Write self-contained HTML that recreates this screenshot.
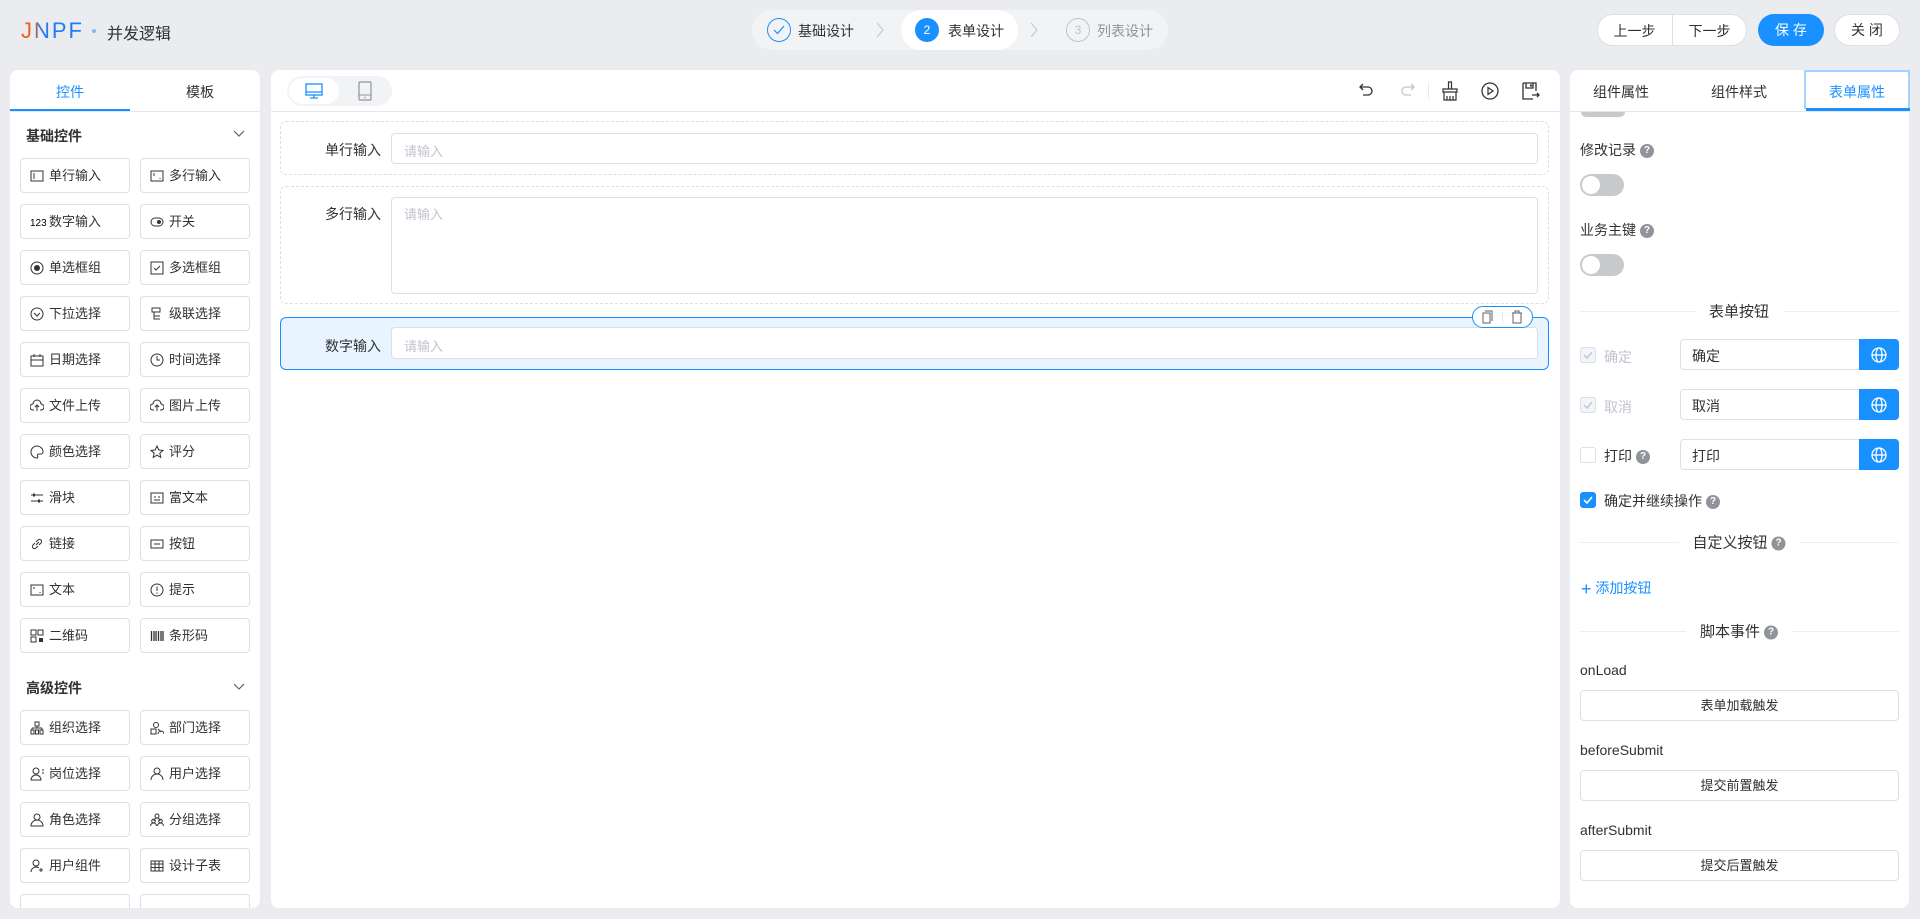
<!DOCTYPE html>
<html><head><meta charset="utf-8"><style>
*{box-sizing:border-box;margin:0;padding:0}
body{width:1920px;height:919px;background:#ebecf0;font-family:"Liberation Sans","Noto Sans CJK SC",sans-serif;color:#303133;position:relative;overflow:hidden;font-size:14px}
.abs{position:absolute}
.panel{position:absolute;background:#fff;border-radius:8px}
.item{position:absolute;width:110px;height:35px;border:1px solid #dcdfe6;border-radius:4px;font-size:13px;line-height:33px;padding-left:28px;color:#303133}
.item svg{position:absolute;left:9px;top:10px}
.q{display:inline-block;width:14px;height:14px;border-radius:50%;background:#909399;color:#fff;font-size:10px;line-height:14px;text-align:center;font-weight:bold;vertical-align:middle;margin-left:4px}
.tog{position:absolute;width:44px;height:22px;border-radius:11px;background:#c8c9cc}
.tog:after{content:"";position:absolute;left:2px;top:2px;width:18px;height:18px;border-radius:50%;background:#fff}
.div{position:absolute;left:1580px;width:319px;height:1px;background:#ebeef5}
.divt{position:absolute;background:#fff;padding:0 14px;font-size:15px;color:#303133;transform:translate(-50%,-50%);left:1739px}
.inp{position:absolute;border:1px solid #dcdfe6;border-radius:4px;background:#fff}
.gbtn{position:absolute;width:40px;height:31px;background:#1890ff;border-radius:0 4px 4px 0}
.cb{position:absolute;width:16px;height:16px;border:1px solid #dcdfe6;border-radius:3px;background:#fff}
.btnw{position:absolute;left:1580px;width:319px;height:31px;border:1px solid #dcdfe6;border-radius:4px;text-align:center;line-height:29px;font-size:13px}
</style></head><body>

<!-- header -->
<div class="abs" style="left:21px;top:18px;font-size:22px;font-weight:normal;letter-spacing:2px;background:linear-gradient(90deg,#f25c1f 0%,#f25c1f 15%,#1f7cf2 35%,#1f7cf2 100%);-webkit-background-clip:text;color:transparent;font-family:'Liberation Sans',sans-serif">JNPF</div>
<div class="abs" style="left:92px;top:29px;width:4px;height:4px;border-radius:50%;background:#8ab4f8"></div>
<div class="abs" style="left:107px;top:20px;font-size:16px;color:#303133">并发逻辑</div>

<div class="abs" style="left:752px;top:10px;width:416px;height:40px;border-radius:20px;background:#f2f3f5"></div>
<div class="abs" style="left:901px;top:10px;width:117px;height:40px;border-radius:20px;background:#fff"></div>
<div class="abs" style="left:767px;top:18px;width:24px;height:24px;border-radius:50%;border:1px solid #1890ff"></div>
<svg class="abs" style="left:773px;top:24px" width="12" height="12" viewBox="0 0 12 12"><path d="M1 6l3.5 3.5L11 2" stroke="#1890ff" fill="none" stroke-width="1.2"/></svg>
<div class="abs" style="left:798px;top:21px;font-size:14px">基础设计</div>
<svg class="abs" style="left:876px;top:22px" width="8" height="16"><path d="M1 1l6 7-6 7" stroke="#c0c4cc" fill="none"/></svg>
<div class="abs" style="left:915px;top:18px;width:24px;height:24px;border-radius:50%;background:#1890ff;color:#fff;font-size:12px;text-align:center;line-height:24px">2</div>
<div class="abs" style="left:948px;top:21px;font-size:14px">表单设计</div>
<svg class="abs" style="left:1030px;top:22px" width="8" height="16"><path d="M1 1l6 7-6 7" stroke="#c0c4cc" fill="none"/></svg>
<div class="abs" style="left:1066px;top:18px;width:24px;height:24px;border-radius:50%;border:1px solid #c0c4cc;color:#c0c4cc;font-size:12px;text-align:center;line-height:22px">3</div>
<div class="abs" style="left:1097px;top:21px;font-size:14px;color:#909399">列表设计</div>

<div class="abs" style="left:1597px;top:14px;width:150px;height:32px;border:1px solid #dcdfe6;border-radius:16px;background:#fff"></div>
<div class="abs" style="left:1672px;top:15px;width:1px;height:30px;background:#dcdfe6"></div>
<div class="abs" style="left:1597px;top:21px;width:75px;text-align:center;font-size:14px">上一步</div>
<div class="abs" style="left:1672px;top:21px;width:75px;text-align:center;font-size:14px">下一步</div>
<div class="abs" style="left:1758px;top:14px;width:66px;height:32px;border-radius:16px;background:#1890ff;color:#fff;text-align:center;line-height:32px;font-size:14px">保 存</div>
<div class="abs" style="left:1834px;top:14px;width:66px;height:32px;border-radius:16px;background:#fff;border:1px solid #dcdfe6;text-align:center;line-height:30px;font-size:14px">关 闭</div>

<!-- left panel -->
<div class="panel" style="left:10px;top:70px;width:250px;height:838px"></div>
<div class="abs" style="left:10px;top:111px;width:250px;height:1px;background:#e4e7ed"></div>
<div class="abs" style="left:10px;top:109px;width:120px;height:2px;background:#1890ff"></div>
<div class="abs" style="left:56px;top:82px;color:#1890ff;font-size:14px">控件</div>
<div class="abs" style="left:186px;top:82px;font-size:14px">模板</div>
<div class="abs" style="left:26px;top:126px;font-size:14px;font-weight:bold">基础控件</div>
<svg class="abs" style="left:233px;top:130px" width="12" height="8"><path d="M1 1l5 5 5-5" stroke="#606266" fill="none" stroke-width="1.2"/></svg>
<div class="abs" style="left:26px;top:678px;font-size:14px;font-weight:bold">高级控件</div>
<svg class="abs" style="left:233px;top:683px" width="12" height="8"><path d="M1 1l5 5 5-5" stroke="#606266" fill="none" stroke-width="1.2"/></svg>

<div class="item" style="left:20px;top:158px"><svg width="14" height="14"><rect x="1" y="2" width="12" height="10" fill="none" stroke="#333"/><path d="M4 4v6" stroke="#333"/></svg>单行输入</div>
<div class="item" style="left:140px;top:158px"><svg width="14" height="14"><rect x="1" y="2" width="12" height="10" fill="none" stroke="#333"/><path d="M4 4v3M10 9v1" stroke="#333"/></svg>多行输入</div>
<div class="item" style="left:20px;top:204px"><svg width="16" height="14"><text x="0" y="11" font-size="10" font-family="Liberation Sans">123</text></svg>数字输入</div>
<div class="item" style="left:140px;top:204px"><svg width="14" height="14"><rect x="1" y="3" width="12" height="8" rx="4" fill="none" stroke="#333"/><circle cx="9" cy="7" r="2" fill="#333"/></svg>开关</div>
<div class="item" style="left:20px;top:250px"><svg width="14" height="14"><circle cx="7" cy="7" r="6" fill="none" stroke="#333"/><circle cx="7" cy="7" r="3" fill="#333"/></svg>单选框组</div>
<div class="item" style="left:140px;top:250px"><svg width="14" height="14"><rect x="1" y="1" width="12" height="12" fill="none" stroke="#333"/><path d="M4 7l2 2 4-4" stroke="#333" fill="none"/></svg>多选框组</div>
<div class="item" style="left:20px;top:296px"><svg width="14" height="14"><circle cx="7" cy="7" r="6" fill="none" stroke="#333"/><path d="M4 6l3 3 3-3" stroke="#333" fill="none"/></svg>下拉选择</div>
<div class="item" style="left:140px;top:296px"><svg width="14" height="14"><path d="M2 1h8v4H2zM4 5v7h6M4 9h6" stroke="#333" fill="none"/></svg>级联选择</div>
<div class="item" style="left:20px;top:342px"><svg width="14" height="14"><rect x="1" y="3" width="12" height="10" fill="none" stroke="#333"/><path d="M4 1v3M10 1v3M1 7h12" stroke="#333"/></svg>日期选择</div>
<div class="item" style="left:140px;top:342px"><svg width="14" height="14"><circle cx="7" cy="7" r="6" fill="none" stroke="#333"/><path d="M7 3v4h3" stroke="#333" fill="none"/></svg>时间选择</div>
<div class="item" style="left:20px;top:388px"><svg width="14" height="14"><path d="M4 11H3a3 3 0 010-6 4 4 0 018 0 3 3 0 010 6h-1M7 12V6M5 8l2-2 2 2" stroke="#333" fill="none"/></svg>文件上传</div>
<div class="item" style="left:140px;top:388px"><svg width="14" height="14"><path d="M4 11H3a3 3 0 010-6 4 4 0 018 0 3 3 0 010 6h-1M7 12V6M5 8l2-2 2 2" stroke="#333" fill="none"/></svg>图片上传</div>
<div class="item" style="left:20px;top:434px"><svg width="14" height="14"><path d="M7 1a6 6 0 100 12c1 0 1-1 .5-2s0-2 1.5-2h2a2 2 0 002-2A6 6 0 007 1z" stroke="#333" fill="none"/></svg>颜色选择</div>
<div class="item" style="left:140px;top:434px"><svg width="14" height="14"><path d="M7 1l1.8 4 4.2.4-3.2 2.8 1 4.2L7 10.2 3.2 12.4l1-4.2L1 5.4l4.2-.4z" stroke="#333" fill="none"/></svg>评分</div>
<div class="item" style="left:20px;top:480px"><svg width="14" height="14"><path d="M1 4h12M1 10h12" stroke="#333"/><rect x="3" y="2.5" width="2" height="3" fill="#333"/><rect x="8" y="8.5" width="2" height="3" fill="#333"/></svg>滑块</div>
<div class="item" style="left:140px;top:480px"><svg width="14" height="14"><rect x="1" y="2" width="12" height="10" fill="none" stroke="#333"/><path d="M4 6h2M8 6h2M4 9h6" stroke="#333"/></svg>富文本</div>
<div class="item" style="left:20px;top:526px"><svg width="14" height="14"><path d="M6 8l3-3M5 6L3 8a2 2 0 003 3l2-2M9 8l2-2a2 2 0 00-3-3L6 5" stroke="#333" fill="none"/></svg>链接</div>
<div class="item" style="left:140px;top:526px"><svg width="14" height="14"><rect x="1" y="3" width="12" height="8" fill="none" stroke="#333"/><path d="M4 7h6" stroke="#333"/></svg>按钮</div>
<div class="item" style="left:20px;top:572px"><svg width="14" height="14"><rect x="1" y="2" width="12" height="10" fill="none" stroke="#333"/><path d="M4 4v2M10 9v1" stroke="#333"/></svg>文本</div>
<div class="item" style="left:140px;top:572px"><svg width="14" height="14"><circle cx="7" cy="7" r="6" fill="none" stroke="#333"/><path d="M7 3.5v4.5M7 9.5v1.2" stroke="#333"/></svg>提示</div>
<div class="item" style="left:20px;top:618px"><svg width="14" height="14"><path d="M1 1h5v5H1zM8 1h5v5H8zM1 8h5v5H1z" stroke="#333" fill="none"/><rect x="9" y="9" width="4" height="4" fill="#333"/></svg>二维码</div>
<div class="item" style="left:140px;top:618px"><svg width="14" height="14"><path d="M1.5 2v10M4 2v10M6 2v10M8.5 2v10M11 2v10M13 2v10" stroke="#333" stroke-width="1.3"/></svg>条形码</div>
<div class="item" style="left:20px;top:710px"><svg width="14" height="14"><path d="M5 1h4v4H5zM7 5v2M2 7h10M2 7v2M12 7v2M1 9h3v4H1zM5.5 9h3v4h-3zM10 9h3v4h-3z" stroke="#333" fill="none"/></svg>组织选择</div>
<div class="item" style="left:140px;top:710px"><svg width="14" height="14"><circle cx="6" cy="4" r="2.5" fill="none" stroke="#333"/><path d="M1 8h5v5H1zM8 13a3 3 0 016 0M8 8l3 3" stroke="#333" fill="none"/></svg>部门选择</div>
<div class="item" style="left:20px;top:756px"><svg width="14" height="14"><circle cx="6" cy="4" r="3" fill="none" stroke="#333"/><path d="M1 13a5 5 0 0110 0zM12 3h2M12 6h2" stroke="#333" fill="none"/></svg>岗位选择</div>
<div class="item" style="left:140px;top:756px"><svg width="14" height="14"><circle cx="7" cy="4" r="3" fill="none" stroke="#333"/><path d="M1 13a6 6 0 0112 0" stroke="#333" fill="none"/></svg>用户选择</div>
<div class="item" style="left:20px;top:802px"><svg width="14" height="14"><circle cx="7" cy="4" r="3" fill="none" stroke="#333"/><path d="M1 13a6 6 0 0112 0z" stroke="#333" fill="none"/></svg>角色选择</div>
<div class="item" style="left:140px;top:802px"><svg width="14" height="14"><circle cx="7" cy="3" r="2" fill="none" stroke="#333"/><circle cx="3.5" cy="8" r="1.8" fill="none" stroke="#333"/><circle cx="10.5" cy="8" r="1.8" fill="none" stroke="#333"/><path d="M0.5 13a3 3 0 016 0M7.5 13a3 3 0 016 0M4 8a3 3 0 016 0" stroke="#333" fill="none"/></svg>分组选择</div>
<div class="item" style="left:20px;top:848px"><svg width="14" height="14"><circle cx="6" cy="4" r="3" fill="none" stroke="#333"/><path d="M1 13a5 5 0 018-4M11 9v4M9 11h4" stroke="#333" fill="none"/></svg>用户组件</div>
<div class="item" style="left:140px;top:848px"><svg width="14" height="14"><rect x="1" y="2" width="12" height="10" fill="none" stroke="#333"/><path d="M1 5h12M1 8.5h12M5 2v10M9 2v10" stroke="#333"/></svg>设计子表</div>
<div class="item" style="left:20px;top:894px;height:14px;border-bottom:none;border-radius:4px 4px 0 0"></div>
<div class="item" style="left:140px;top:894px;height:14px;border-bottom:none;border-radius:4px 4px 0 0"></div>

<!-- center panel -->
<div class="panel" style="left:271px;top:70px;width:1289px;height:838px"></div>
<div class="abs" style="left:271px;top:111px;width:1289px;height:1px;background:#e4e7ed"></div>
<div class="abs" style="left:287px;top:76px;width:105px;height:30px;border-radius:15px;background:#f2f3f5"></div>
<div class="abs" style="left:289px;top:78px;width:50px;height:26px;border-radius:13px;background:#fff"></div>
<svg class="abs" style="left:305px;top:82px" width="18" height="18"><rect x="1" y="2" width="16" height="11" fill="none" stroke="#1890ff" stroke-width="1.3"/><path d="M1 10h16M9 13v3M5 16h8" stroke="#1890ff" stroke-width="1.3"/></svg>
<svg class="abs" style="left:358px;top:81px" width="14" height="20"><rect x="1" y="1" width="12" height="18" rx="1" fill="none" stroke="#909399" stroke-width="1.2"/><path d="M1 14h12" stroke="#909399"/><circle cx="7" cy="16.5" r=".8" fill="#909399"/></svg>

<svg class="abs" style="left:1359px;top:82px" width="16" height="16"><path d="M4 2L1 5l3 3M1 5h8a4 4 0 010 8H4" stroke="#303133" fill="none" stroke-width="1.3"/></svg>
<svg class="abs" style="left:1399px;top:82px" width="16" height="16"><path d="M12 2l3 3-3 3M15 5H7a4 4 0 000 8h5" stroke="#c0c4cc" fill="none" stroke-width="1.3"/></svg>
<div class="abs" style="left:1428px;top:83px;width:1px;height:16px;background:#e4e7ed"></div>
<svg class="abs" style="left:1441px;top:81px" width="18" height="20"><path d="M7.5 1h3v7h-3zM2 8h14v3H2zM3 11h12v8H3zM6 15v4M9 15v4M12 15v4" stroke="#303133" fill="none" stroke-width="1.2"/></svg>
<svg class="abs" style="left:1481px;top:82px" width="18" height="18"><circle cx="9" cy="9" r="8" fill="none" stroke="#303133" stroke-width="1.3"/><path d="M7 5.5v7l5-3.5z" fill="none" stroke="#303133" stroke-width="1.2"/></svg>
<svg class="abs" style="left:1522px;top:82px" width="18" height="18"><path d="M1 1h13v8M1 1v16h10M4 1v5h7V1" stroke="#303133" fill="none" stroke-width="1.3"/><rect x="8" y="2.5" width="2" height="2" fill="#303133"/><path d="M10 13h7M15 11l2 2-2 2" stroke="#303133" fill="none" stroke-width="1.3"/></svg>

<div class="abs" style="left:280px;top:121px;width:1269px;height:54px;border:1px dashed #dcdfe6;border-radius:6px"></div>
<div class="abs" style="left:300px;top:140px;width:81px;text-align:right;font-size:14px">单行输入</div>
<div class="inp" style="left:391px;top:133px;width:1147px;height:31px"></div>
<div class="abs" style="left:404px;top:141px;font-size:13px;color:#c0c4cc">请输入</div>

<div class="abs" style="left:280px;top:186px;width:1269px;height:118px;border:1px dashed #dcdfe6;border-radius:6px"></div>
<div class="abs" style="left:300px;top:204px;width:81px;text-align:right;font-size:14px">多行输入</div>
<div class="inp" style="left:391px;top:197px;width:1147px;height:97px"></div>
<div class="abs" style="left:404px;top:204px;font-size:13px;color:#c0c4cc">请输入</div>

<div class="abs" style="left:280px;top:317px;width:1269px;height:53px;border:1px solid #1890ff;border-radius:6px;background:#e8f4ff"></div>
<div class="abs" style="left:300px;top:336px;width:81px;text-align:right;font-size:14px">数字输入</div>
<div class="inp" style="left:391px;top:327px;width:1147px;height:32px"></div>
<div class="abs" style="left:404px;top:336px;font-size:13px;color:#c0c4cc">请输入</div>
<div class="abs" style="left:1472px;top:306px;width:61px;height:22px;border:1px solid #1890ff;border-radius:11px;background:#fff"></div>
<div class="abs" style="left:1502px;top:311px;width:1px;height:12px;background:#e4e7ed"></div>
<svg class="abs" style="left:1482px;top:310px" width="12" height="14"><path d="M3 1h7v10M1 3h7v10H1z" stroke="#606266" fill="none"/></svg>
<svg class="abs" style="left:1511px;top:310px" width="12" height="14"><path d="M1 3h10M4 3V1h4v2M2 3v10h8V3" stroke="#606266" fill="none"/></svg>

<!-- right panel -->
<div class="panel" style="left:1570px;top:70px;width:339px;height:838px"></div>
<div class="abs" style="left:1570px;top:111px;width:339px;height:1px;background:#e4e7ed"></div>
<div class="abs" style="left:1593px;top:82px;font-size:14px">组件属性</div>
<div class="abs" style="left:1711px;top:82px;font-size:14px">组件样式</div>
<div class="abs" style="left:1804px;top:70px;width:106px;height:39px;border:2px solid #a3d3ff;border-bottom:none"></div>
<div class="abs" style="left:1806px;top:108px;width:104px;height:3px;background:#1890ff"></div>
<div class="abs" style="left:1829px;top:82px;font-size:14px;color:#1890ff">表单属性</div>
<div class="abs" style="left:1581px;top:112px;width:44px;height:5px;border-radius:0 0 11px 11px;background:#c8c9cc"></div>

<div class="abs" style="left:1580px;top:140px;font-size:14px">修改记录<span class="q">?</span></div>
<div class="tog" style="left:1580px;top:174px"></div>
<div class="abs" style="left:1580px;top:220px;font-size:14px">业务主键<span class="q">?</span></div>
<div class="tog" style="left:1580px;top:254px"></div>

<div class="div" style="top:311px"></div><div class="divt" style="top:311px">表单按钮</div>

<div class="cb" style="left:1580px;top:347px;background:#f2f6fc"></div>
<svg class="abs" style="left:1583px;top:351px" width="10" height="8"><path d="M1 4l3 3 5-6" stroke="#c0c4cc" fill="none" stroke-width="1.4"/></svg>
<div class="abs" style="left:1604px;top:347px;font-size:14px;color:#c0c4cc">确定</div>
<div class="inp" style="left:1680px;top:339px;width:180px;height:31px;border-radius:4px 0 0 4px"></div>
<div class="abs" style="left:1692px;top:346px;font-size:14px">确定</div>
<div class="gbtn" style="left:1859px;top:339px"></div>

<div class="cb" style="left:1580px;top:397px;background:#f2f6fc"></div>
<svg class="abs" style="left:1583px;top:401px" width="10" height="8"><path d="M1 4l3 3 5-6" stroke="#c0c4cc" fill="none" stroke-width="1.4"/></svg>
<div class="abs" style="left:1604px;top:397px;font-size:14px;color:#c0c4cc">取消</div>
<div class="inp" style="left:1680px;top:389px;width:180px;height:31px;border-radius:4px 0 0 4px"></div>
<div class="abs" style="left:1692px;top:396px;font-size:14px">取消</div>
<div class="gbtn" style="left:1859px;top:389px"></div>

<div class="cb" style="left:1580px;top:447px"></div>
<div class="abs" style="left:1604px;top:446px;font-size:14px">打印<span class="q">?</span></div>
<div class="inp" style="left:1680px;top:439px;width:180px;height:31px;border-radius:4px 0 0 4px"></div>
<div class="abs" style="left:1692px;top:446px;font-size:14px">打印</div>
<div class="gbtn" style="left:1859px;top:439px"></div>

<svg class="abs" style="left:1869px;top:344px" width="20" height="120"><g fill="none" stroke="#fff" stroke-width="1.3"><circle cx="10" cy="11" r="7"/><ellipse cx="10" cy="11" rx="3" ry="7"/><path d="M3 11h14"/><circle cx="10" cy="61" r="7"/><ellipse cx="10" cy="61" rx="3" ry="7"/><path d="M3 61h14"/><circle cx="10" cy="111" r="7"/><ellipse cx="10" cy="111" rx="3" ry="7"/><path d="M3 111h14"/></g></svg>

<div class="cb" style="left:1580px;top:492px;background:#1890ff;border-color:#1890ff"></div>
<svg class="abs" style="left:1583px;top:496px" width="10" height="8"><path d="M1 4l3 3 5-6" stroke="#fff" fill="none" stroke-width="1.6"/></svg>
<div class="abs" style="left:1604px;top:491px;font-size:14px">确定并继续操作<span class="q">?</span></div>

<div class="div" style="top:542px"></div><div class="divt" style="top:542px">自定义按钮<span class="q">?</span></div>
<div class="abs" style="left:1581px;top:578px;font-size:14px;color:#1890ff"><span style="font-size:18px;vertical-align:-2px">+</span> 添加按钮</div>

<div class="div" style="top:631px"></div><div class="divt" style="top:631px">脚本事件<span class="q">?</span></div>
<div class="abs" style="left:1580px;top:662px;font-size:14px">onLoad</div>
<div class="btnw" style="top:690px">表单加载触发</div>
<div class="abs" style="left:1580px;top:742px;font-size:14px">beforeSubmit</div>
<div class="btnw" style="top:770px">提交前置触发</div>
<div class="abs" style="left:1580px;top:822px;font-size:14px">afterSubmit</div>
<div class="btnw" style="top:850px">提交后置触发</div>
</body></html>
